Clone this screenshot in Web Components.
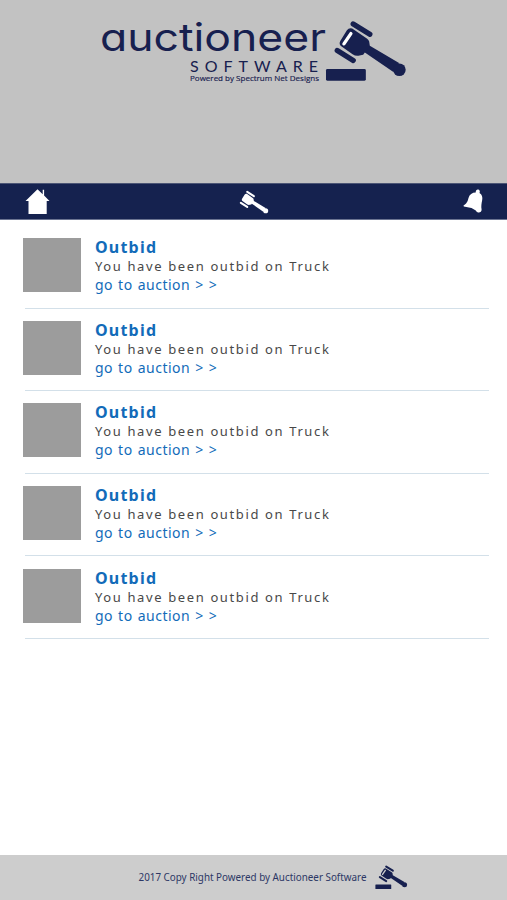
<!DOCTYPE html>
<html lang="en">
<head>
<meta charset="utf-8">
<title>Auctioneer Software</title>
<style>
    body {
        margin: 0;
        background: #fff;
        font-family: "Noto Sans", "Open Sans", sans-serif;
    }
</style>
</head>
<body>
<auction-app></auction-app>

<script>
class GavelIcon extends HTMLElement {
    constructor() {
        super();
        this.attachShadow({ mode: "open" });
        // the nav version has no sounding block
        const block = this.hasAttribute("no-block") ? "" : '<rect x="48" y="178" width="120" height="35" rx="4"/>';
        const box = this.getAttribute("box") || "45 30 250 190";
        this.shadowRoot.innerHTML = `
            <style>
                :host { display: block; color: #17204f; }
                svg { display: block; width: 100%; height: 100%; }
            </style>
            <svg viewBox="${box}" preserveAspectRatio="none" fill="currentColor">
                <path d="M130 42L180 73M82 122L130 152" stroke="currentColor" stroke-width="16" stroke-linecap="round"/>
                <path d="M127 56Q117 53 111 61L91 93Q86 103 94 109L128 133Q138 140 149 137L160 135L165 128L251 187L268 160L180 108L178 95Q177 90 171 86Z"/>
                <circle cx="269" cy="180" r="19"/>
                ${block}
                <path d="M123 71L102 102" stroke="var(--shine, #fff)" stroke-width="10" stroke-linecap="round"/>
            </svg>
        `;
    }
}
customElements.define("gavel-icon", GavelIcon);

class AuctionLogo extends HTMLElement {
    constructor() {
        super();
        this.attachShadow({ mode: "open" });
        this.shadowRoot.innerHTML = `
            <style>
                :host {
                    display: flex;
                    height: 183px;
                    box-sizing: border-box;
                    padding: 20px 0 0 100px;
                    background: #c2c2c2;
                }
                .words { width: 226px; height: 66px; fill: #17204f; overflow: visible; }
                .name { font: 400 38.5px Inter, sans-serif; font-feature-settings: "cv11"; }
                .sub { font: 400 16px Lato, sans-serif; }
                .by { font: 500 7.8px "Open Sans", sans-serif; stroke: #17204f; stroke-width: .15px; }
                gavel-icon { width: 83px; height: 63px; margin-left: -1px; }
            </style>
            <svg class="words" viewBox="0 0 226 66">
                <text class="name" x="0" y="31" textLength="226" lengthAdjust="spacingAndGlyphs">auctioneer</text>
                <text class="sub" x="90" y="51.6" textLength="128">SOFTWARE</text>
                <text class="by" x="90" y="61" textLength="129" lengthAdjust="spacingAndGlyphs">Powered by Spectrum Net Designs</text>
            </svg>
            <gavel-icon></gavel-icon>
        `;
    }
}
customElements.define("auction-logo", AuctionLogo);

class AuctionNav extends HTMLElement {
    constructor() {
        super();
        this.attachShadow({ mode: "open" });
        this.shadowRoot.innerHTML = `
            <style>
                :host {
                    display: flex;
                    justify-content: space-between;
                    align-items: center;
                    height: 37px;
                    box-sizing: border-box;
                    padding: 0 23px 0 25px;
                    background: #15224f;
                    border-top: 1px solid #4b5575;
                    border-bottom: 1px solid #6b7491;
                    fill: #fff;
                }
                svg { display: block; }
                gavel-icon { width: 30px; height: 24px; color: #fff; --shine: #fff; margin-left: -5px; }
            </style>
            <svg width="25" height="26" viewBox="0 0 25 26">
                <path d="M12.5 .3L17.7 5.2V.8H19.1V6.5L24.5 12H21.7V25H3.5V12H.5Z"/>
            </svg>
            <gavel-icon no-block box="68 28 226 176"></gavel-icon>
            <svg width="21" height="25" viewBox="0 0 21 25">
                <path d="M12.7 3.4C12.6 1.4 13.7 .3 15 .4C16.6 .5 17.3 2.2 16.5 3.9C19 5.3 19.8 8 19.2 11C18.5 14.6 18 17.5 18.6 20.4C18.8 23.6 14.6 24.8 12.8 21.4L8.5 19L.8 17.4L.5 16.4C3.8 14.6 4.6 12.5 5.5 9C6.5 5.2 9.2 3.4 12.7 3.4Z"/>
            </svg>
        `;
    }
}
customElements.define("auction-nav", AuctionNav);

class BidNotice extends HTMLElement {
    constructor() {
        super();
        this.attachShadow({ mode: "open" });
        this.shadowRoot.innerHTML = `
            <style>
                :host {
                    display: block;
                    height: 82.67px;
                    box-sizing: border-box;
                    padding: 12px 18px 0 23px;
                }
                .row { display: flex; height: 69.5px; gap: 14.5px; }
                .thumb { width: 57.5px; height: 54px; background: #9c9c9c; }
                .title, .message, .link { display: block; white-space: nowrap; }
                .title {
                    font: 700 16px/19px "Noto Sans", sans-serif;
                    letter-spacing: 1.2px;
                    color: #126bb9;
                }
                .message {
                    font: 400 13px/18px "Noto Sans", sans-serif;
                    letter-spacing: 1.62px;
                    color: #484848;
                }
                .link {
                    font: 400 14px/19px "Noto Sans", sans-serif;
                    letter-spacing: .5px;
                    word-spacing: .9px;
                    color: #126bb9;
                }
                .rule { height: 1px; margin-left: 2px; background: #d3e0e9; }
            </style>
            <div class="row">
                <div class="thumb"></div>
                <div class="text">
                    <span class="title"><slot name="title"></slot></span>
                    <span class="message"><slot></slot></span>
                    <span class="link">go to auction &gt; &gt;</span>
                </div>
            </div>
            <div class="rule"></div>
        `;
    }
}
customElements.define("bid-notice", BidNotice);

class AuctionFooter extends HTMLElement {
    constructor() {
        super();
        this.attachShadow({ mode: "open" });
        this.shadowRoot.innerHTML = `
            <style>
                :host {
                    display: flex;
                    height: 45px;
                    box-sizing: border-box;
                    padding: 10px 0 0 138px;
                    background: #cdcdcd;
                }
                svg { width: 229px; height: 24px; overflow: visible; }
                text { font: 400 10.5px "Noto Sans", sans-serif; fill: #2c3765; }
                gavel-icon { width: 33px; height: 25px; margin-left: 8px; --shine: #cdcdcd; }
            </style>
            <svg viewBox="0 0 229 24">
                <text x="0.5" y="16" textLength="228" lengthAdjust="spacingAndGlyphs">2017 Copy Right Powered by Auctioneer Software</text>
            </svg>
            <gavel-icon></gavel-icon>
        `;
    }
}
customElements.define("auction-footer", AuctionFooter);

class AuctionApp extends HTMLElement {
    constructor() {
        super();
        this.attachShadow({ mode: "open" });
        let notices = "";
        for (let i = 0; i < 5; i++) {
            notices += '<bid-notice><span slot="title">Outbid</span>You have been outbid on Truck</bid-notice>';
        }
        this.shadowRoot.innerHTML = `
            <style>
                :host {
                    display: flex;
                    flex-direction: column;
                    height: 900px;
                }
                main { flex: 1; padding-top: 6px; }
            </style>
            <auction-logo></auction-logo>
            <auction-nav></auction-nav>
            <main>${notices}</main>
            <auction-footer></auction-footer>
        `;
    }
}
customElements.define("auction-app", AuctionApp);
</script>
</body>
</html>
